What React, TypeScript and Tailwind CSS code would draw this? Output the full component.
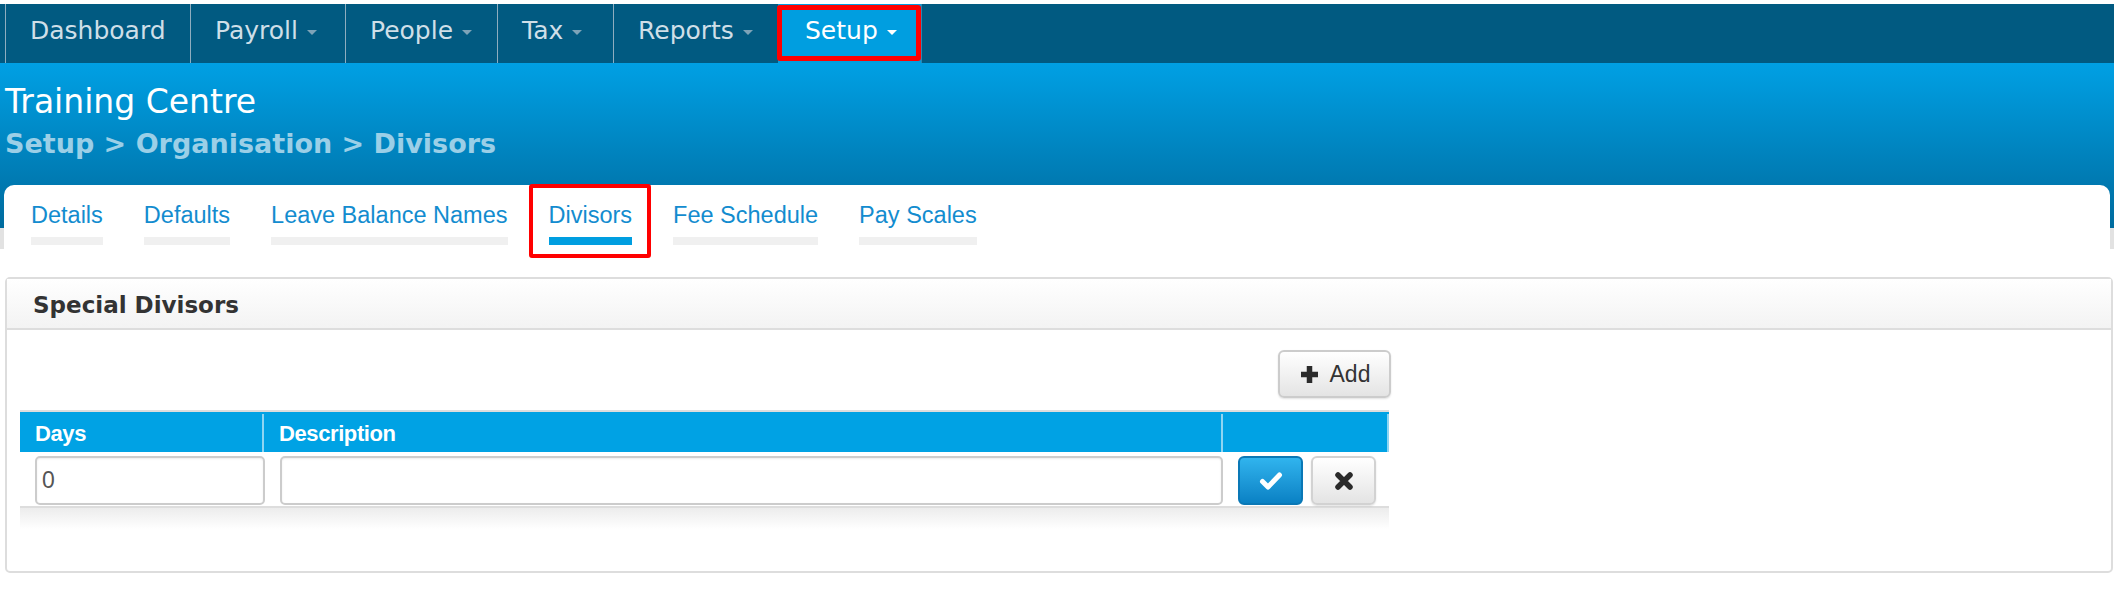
const navFont = "font-['DejaVu_Sans','Verdana',sans-serif]";
const sansFont = "font-['Liberation_Sans','Arial',sans-serif]";

const navItems = [
  { label: "Dashboard", caret: false, width: "w-[185px]" },
  { label: "Payroll", caret: true, width: "w-[155px]" },
  { label: "People", caret: true, width: "w-[152px]" },
  { label: "Tax", caret: true, width: "w-[116px]" },
  { label: "Reports", caret: true, width: "w-[165px]" },
];

const tabs = ["Details", "Defaults", "Leave Balance Names", "Divisors", "Fee Schedule", "Pay Scales"];

function Caret({ light }: { light?: boolean }) {
  return (
    <span
      className={`ml-[9px] mt-[4px] h-0 w-0 border-l-[5px] border-r-[5px] border-t-[5px] border-l-transparent border-r-transparent ${
        light ? "border-t-white" : "border-t-[#7ea3b8]"
      }`}
    />
  );
}

function TopNav() {
  return (
    <div className={`flex h-[59px] bg-[#015a81] pl-[5px] ${navFont}`}>
      {navItems.map((item) => (
        <div
          key={item.label}
          className={`flex shrink-0 items-center border-l border-[#8fadbf] pb-[6px] pl-[24px] text-[25px] text-[#cfdfe8] ${item.width}`}
        >
          {item.label}
          {item.caret && <Caret />}
        </div>
      ))}
      <div className="relative flex w-[143px] shrink-0 items-center bg-[#009ee0] pb-[6px] pl-[27px] text-[25px] text-white">
        Setup
        <Caret light />
        {/* annotation box */}
        <div className="absolute left-[-1px] top-[1px] h-[56px] w-[144px] rounded-[3px] border-[5px] border-[#ff0000]" />
      </div>
      <div className="border-l border-[#2f86b0]" />
    </div>
  );
}

function Header() {
  return (
    <div className="bg-[linear-gradient(to_bottom,#00a0e4_0px,#006b9e_165px,#e2e2e2_165px,#e2e2e2_187px)] px-[4px] pt-[20px]">
      <div className={`pl-[1px] text-[33px] leading-[37px] text-white ${navFont}`}>Training Centre</div>
      <div className={`mt-[8px] pl-[1px] text-[27px] font-bold leading-[32px] text-[#9bcfe7] ${navFont}`}>
        Setup &gt; Organisation &gt; Divisors
      </div>
      <div className={`relative mt-[25px] flex h-[64px] gap-[41px] rounded-t-[10px] bg-white pl-[27px] pt-[17px] ${sansFont}`}>
        {tabs.map((t) => (
          <div key={t} className="flex flex-col">
            <span className="text-[23.5px] leading-[26px] text-[#138ccf]">{t}</span>
            <span className={`mt-[9px] h-[8px] ${t === "Divisors" ? "bg-[#009ee0]" : "bg-[#f0f0f0]"}`} />
          </div>
        ))}
        <div className="absolute left-[525px] top-[-1px] h-[74px] w-[122px] rounded-[3px] border-[4px] border-[#ff0000]" />
      </div>
    </div>
  );
}

function PlusIcon() {
  return (
    <svg width="21" height="21" viewBox="0 0 21 21">
      <path d="M10.5 2v17M2 10.5h17" stroke="#2b2b2b" strokeWidth="5.5" />
    </svg>
  );
}

function CheckIcon() {
  return (
    <svg width="24" height="20" viewBox="0 0 24 20">
      <path d="M3.5 10.5l5.5 5.5L20.5 4" fill="none" stroke="#fff" strokeWidth="5" strokeLinecap="round" strokeLinejoin="round" />
    </svg>
  );
}

function CrossIcon() {
  return (
    <svg width="20" height="20" viewBox="0 0 20 20">
      <path d="M4 4l12 12M16 4L4 16" stroke="#2a2a2a" strokeWidth="5.5" strokeLinecap="round" />
    </svg>
  );
}

function DivisorsPanel() {
  return (
    <div className="ml-[5px] mt-[28px] h-[296px] w-[2108px] rounded-[5px] border-2 border-[#dddddd]">
      <div className="flex h-[51px] items-center border-b-2 border-[#dddddd] bg-linear-to-b from-white to-[#f3f3f3] pl-[26px] pt-[3px]">
        <span className={`text-[23px] font-bold leading-[27px] text-[#333333] ${navFont}`}>Special Divisors</span>
      </div>
      <div className={`pl-[13px] pt-[20px] ${sansFont}`}>
        <div className="w-[1371px]">
          <div className="flex justify-end">
            <button className="flex h-[48px] w-[113px] items-center justify-center gap-[10px] rounded-[6px] border-2 border-[#cccccc] bg-linear-to-b from-white to-[#e4e4e4] text-[23px] text-[#333333] shadow-[0_1px_2px_rgba(0,0,0,0.12)]">
              <PlusIcon />
              Add
            </button>
          </div>
          <div className="mt-[12px] w-[1369px] border-t-2 border-[#dddddd]">
            <div className="flex h-[40px] bg-[#00a2e4] pt-[2px] text-[22px] font-bold tracking-[-0.4px] text-white">
              <div className="flex w-[244px] items-center border-r-2 border-[#8ed5f2] pl-[15px]">Days</div>
              <div className="flex w-[959px] items-center border-r-2 border-[#8ed5f2] pl-[15px]">Description</div>
              <div className="flex-1 border-r-2 border-[#8ed5f2]" />
            </div>
            <div className="flex h-[56px] items-start border-b-2 border-[#dddddd] pt-[4px]">
              <div className="ml-[15px] flex h-[49px] w-[230px] items-center rounded-[5px] border-2 border-[#cccccc] pl-[5px] text-[23px] text-[#555555] shadow-[inset_0_1px_2px_rgba(0,0,0,0.08)]">
                0
              </div>
              <div className="ml-[15px] h-[49px] w-[943px] rounded-[5px] border-2 border-[#cccccc] shadow-[inset_0_1px_2px_rgba(0,0,0,0.08)]" />
              <button className="ml-[15px] flex h-[49px] w-[65px] items-center justify-center rounded-[6px] border-2 border-[#0a78b6] bg-linear-to-b from-[#30b4ee] to-[#0981c4]">
                <CheckIcon />
              </button>
              <button className="ml-[8px] flex h-[49px] w-[65px] items-center justify-center rounded-[6px] border-2 border-[#d2d2d2] bg-linear-to-b from-white to-[#e4e4e4] shadow-[0_1px_2px_rgba(0,0,0,0.12)]">
                <CrossIcon />
              </button>
            </div>
            <div className="h-[21px] bg-linear-to-b from-[#ececec] to-white" />
          </div>
        </div>
      </div>
    </div>
  );
}

export default function App() {
  return (
    <div className="h-[592px] w-[2114px] overflow-hidden bg-white pt-[4px]">
      <TopNav />
      <Header />
      <DivisorsPanel />
    </div>
  );
}
